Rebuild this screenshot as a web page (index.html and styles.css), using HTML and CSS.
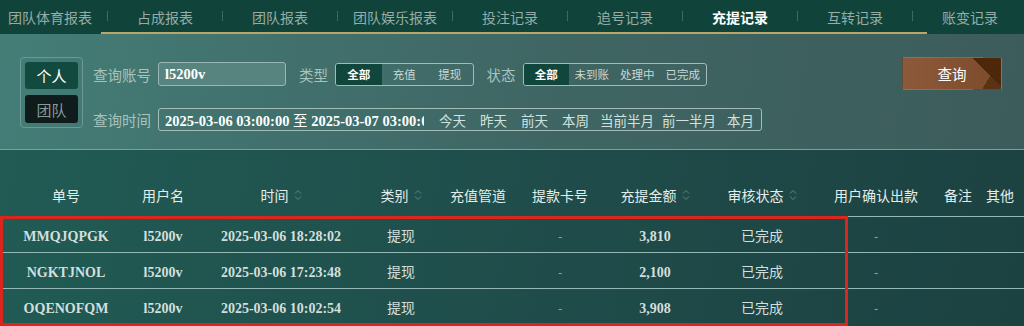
FILE: index.html
```html
<!DOCTYPE html>
<html lang="zh-CN">
<head>
    <meta charset="UTF-8">
    <meta name="viewport" content="width=device-width, initial-scale=1.0">
    <title>充提记录</title>
    <link rel="stylesheet" href="styles.css">
</head>
<body>

<div class="page">
    <nav class="tabs-bar">
        <ul class="tabs">
            <li class="tab">团队体育报表</li><li class="sep"></li>
            <li class="tab">占成报表</li><li class="sep"></li>
            <li class="tab">团队报表</li><li class="sep"></li>
            <li class="tab">团队娱乐报表</li><li class="sep"></li>
            <li class="tab">投注记录</li><li class="sep"></li>
            <li class="tab">追号记录</li><li class="sep"></li>
            <li class="tab active">充提记录</li><li class="sep"></li>
            <li class="tab">互转记录</li><li class="sep"></li>
            <li class="tab">账变记录</li>
        </ul>
        <div class="tab-line"></div>
    </nav>

    <section class="filter">
        <div class="scope">
            <button class="scope-btn active">个人</button>
            <button class="scope-btn">团队</button>
        </div>

        <div class="fields">
            <div class="field-row">
                <span class="label">查询账号</span>
                <div class="text-input">l5200v</div>
                <span class="label spaced">类型</span>
                <div class="seg">
                    <span class="seg-item on">全部</span>
                    <span class="seg-item">充值</span>
                    <span class="seg-item">提现</span>
                </div>
                <span class="label spaced">状态</span>
                <div class="seg">
                    <span class="seg-item on">全部</span>
                    <span class="seg-item">未到账</span>
                    <span class="seg-item">处理中</span>
                    <span class="seg-item">已完成</span>
                </div>
            </div>
            <div class="field-row">
                <span class="label">查询时间</span>
                <div class="date-box">
                    <div class="date-range">2025-03-06 03:00:00 <span class="cjk">至</span> 2025-03-07 03:00:00</div>
                    <span class="quick">今天</span>
                    <span class="quick">昨天</span>
                    <span class="quick">前天</span>
                    <span class="quick">本周</span>
                    <span class="quick wide">当前半月</span>
                    <span class="quick wide">前一半月</span>
                    <span class="quick">本月</span>
                </div>
            </div>
        </div>

        <button class="search-btn">查询</button>
    </section>

    <section class="records">
        <div class="row head">
            <div class="cell">单号</div>
            <div class="cell">用户名</div>
            <div class="cell">时间 <svg class="sort" viewBox="0 0 8 14"><path d="M1 5.5 4 2.5 7 5.5M1 8.5 4 11.5 7 8.5"/></svg></div>
            <div class="cell">类别 <svg class="sort" viewBox="0 0 8 14"><path d="M1 5.5 4 2.5 7 5.5M1 8.5 4 11.5 7 8.5"/></svg></div>
            <div class="cell">充值管道</div>
            <div class="cell">提款卡号</div>
            <div class="cell">充提金额 <svg class="sort" viewBox="0 0 8 14"><path d="M1 5.5 4 2.5 7 5.5M1 8.5 4 11.5 7 8.5"/></svg></div>
            <div class="cell">审核状态 <svg class="sort" viewBox="0 0 8 14"><path d="M1 5.5 4 2.5 7 5.5M1 8.5 4 11.5 7 8.5"/></svg></div>
            <div class="cell">用户确认出款</div>
            <div class="cell">备注</div>
            <div class="cell">其他</div>
        </div>

        <div class="row">
            <div class="cell num">MMQJQPGK</div>
            <div class="cell num">l5200v</div>
            <div class="cell num">2025-03-06 18:28:02</div>
            <div class="cell">提现</div>
            <div class="cell"></div>
            <div class="cell dash">-</div>
            <div class="cell num">3,810</div>
            <div class="cell">已完成</div>
            <div class="cell dash">-</div>
            <div class="cell"></div>
            <div class="cell"></div>
        </div>
        <div class="row">
            <div class="cell num">NGKTJNOL</div>
            <div class="cell num">l5200v</div>
            <div class="cell num">2025-03-06 17:23:48</div>
            <div class="cell">提现</div>
            <div class="cell"></div>
            <div class="cell dash">-</div>
            <div class="cell num">2,100</div>
            <div class="cell">已完成</div>
            <div class="cell dash">-</div>
            <div class="cell"></div>
            <div class="cell"></div>
        </div>
        <div class="row">
            <div class="cell num">OQENOFQM</div>
            <div class="cell num">l5200v</div>
            <div class="cell num">2025-03-06 10:02:54</div>
            <div class="cell">提现</div>
            <div class="cell"></div>
            <div class="cell dash">-</div>
            <div class="cell num">3,908</div>
            <div class="cell">已完成</div>
            <div class="cell dash">-</div>
            <div class="cell"></div>
            <div class="cell"></div>
        </div>

        <!-- red marker drawn over the three rows -->
        <div class="highlight"></div>
    </section>
</div>

</body>
</html>
```

FILE: styles.css
```css
body {
    margin: 0;
    font-family: "Noto Sans CJK SC", "Noto Sans", sans-serif;
    background: #1d4443;
    overflow: hidden;
}

.page {
    width: 1024px;
    height: 326px;
    overflow: hidden;
}

/* top tabs */
.tabs-bar {
    background: #10443a;
    height: 34px;
    overflow: hidden;
}

.tabs {
    list-style: none;
    margin: 0 0 0 -7px;
    padding: 0;
    display: flex;
    align-items: center;
    height: 32px;
}

.tab {
    flex: 0 0 114px;
    text-align: center;
    font-size: 14px;
    line-height: 32px;
    padding-top: 1px;
    color: #97aca8;
    white-space: nowrap;
}

.tab.active {
    color: #fff;
    font-weight: bold;
}

.sep {
    flex: 0 0 1px;
    height: 10px;
    background: #3e6c62;
}

.tab-line {
    margin-left: 101px;
    width: 826px;
    height: 2px;
    background: #b8a66c;
}

/* filter panel */
.filter {
    display: flex;
    align-items: flex-start;
    height: 116px;
    box-sizing: border-box;
    padding: 23px 22px 0 20px;
    background: linear-gradient(100deg, #447d77 0%, #3f6563 55%, #3c5c5b 100%);
    border-bottom: 1px solid #7e9e9a;
}

.scope {
    display: flex;
    flex-direction: column;
    gap: 6px;
    width: 63px;
    box-sizing: border-box;
    padding: 4px;
    border: 1px solid #6f9893;
    border-radius: 4px;
}

.scope-btn {
    height: 27px;
    border: none;
    border-radius: 3px;
    padding: 0;
    font-family: inherit;
    font-size: 15px;
    background: #101b1b;
    color: #87999a;
}

.scope-btn + .scope-btn {
    height: 28px;
}

.scope-btn.active {
    background: #134a40;
    color: #fff;
}

.fields {
    margin-left: 10px;
    padding-top: 5px;
    display: flex;
    flex-direction: column;
    gap: 22px;
}

.field-row {
    display: flex;
    align-items: center;
    height: 24px;
}

.field-row + .field-row {
    height: 23px;
}

.label {
    font-size: 14.5px;
    color: #a7c3be;
    margin-right: 7px;
    white-space: nowrap;
}

.label.spaced {
    margin-left: 13px;
}

.text-input {
    width: 128px;
    height: 24px;
    box-sizing: border-box;
    padding: 0 6px;
    border: 1px solid #9ab8b3;
    border-radius: 3px;
    background: #58847f;
    color: #fff;
    font-family: "Liberation Serif", serif;
    font-weight: bold;
    font-size: 14.5px;
    line-height: 22px;
}

.seg {
    display: flex;
    height: 21px;
    border: 1px solid #a3bcb8;
    border-radius: 3px;
    overflow: hidden;
}

.seg-item {
    width: 46px;
    text-align: center;
    font-size: 11.5px;
    line-height: 21px;
    color: #c8d8d4;
}

.seg-item.on {
    background: #11463c;
    color: #fff;
    font-weight: bold;
}

.label.spaced + .seg .seg-item {
    width: 45.5px;
}

.date-box {
    display: flex;
    align-items: center;
    width: 604px;
    height: 23px;
    box-sizing: border-box;
    border: 1px solid #a3bcb8;
    border-radius: 3px;
}

.date-range {
    width: 260px;
    padding-left: 6px;
    overflow: hidden;
    white-space: nowrap;
    color: #fff;
    font-family: "Liberation Serif", "Noto Sans CJK SC", serif;
    font-weight: bold;
    font-size: 14.5px;
}

.cjk {
    font-family: "Noto Sans CJK SC", sans-serif;
    font-weight: normal;
}

.quick {
    padding: 0 7px;
    font-size: 13.5px;
    color: #d2e1dd;
    white-space: nowrap;
}

.date-range + .quick {
    margin-left: 8px;
}

.quick.wide {
    padding: 0 4px;
}

.search-btn {
    margin-left: auto;
    width: 100px;
    height: 33px;
    border: 1px solid rgba(150, 190, 180, 0.25);
    border-radius: 2px;
    padding: 0;
    color: #fff;
    font-family: inherit;
    font-size: 14.5px;
    background:
        linear-gradient(225deg, #4c2709 0 22%, transparent 22%),
        linear-gradient(300deg, #5a3214 0 16%, transparent 16%),
        linear-gradient(90deg, #8c5a3b, #7c4b2c);
}

/* records table */
.records {
    position: relative;
    height: 175px;
    background: linear-gradient(100deg, #215b54 0%, #1f4c4a 55%, #1c4141 100%);
}

.row {
    display: grid;
    grid-template-columns: 132px 62px 174px 66px 88px 76px 114px 100px 128px 36px 48px;
    height: 36px;
    box-sizing: border-box;
    padding-top: 8px;
    border-top: 1px solid #94b8b3;
    align-items: baseline;
}

.row.head {
    height: 66px;
    padding-top: 24px;
    border-top: none;
    align-items: center;
}

.cell {
    display: flex;
    justify-content: center;
    align-items: center;
    gap: 5px;
    font-size: 14px;
    color: #d3dfdb;
    white-space: nowrap;
}

.head .cell {
    color: #e3eeeb;
}

.num {
    font-family: "Liberation Serif", serif;
    font-weight: bold;
}

.dash {
    color: #9fb3b0;
    font-size: 12px;
}

.sort {
    width: 8px;
    height: 14px;
    fill: none;
    stroke: #5f8580;
    stroke-width: 1;
}

.highlight {
    position: absolute;
    left: 0;
    top: 66px;
    width: 848px;
    height: 110px;
    box-sizing: border-box;
    border: 3px solid #d9271d;
}
```
